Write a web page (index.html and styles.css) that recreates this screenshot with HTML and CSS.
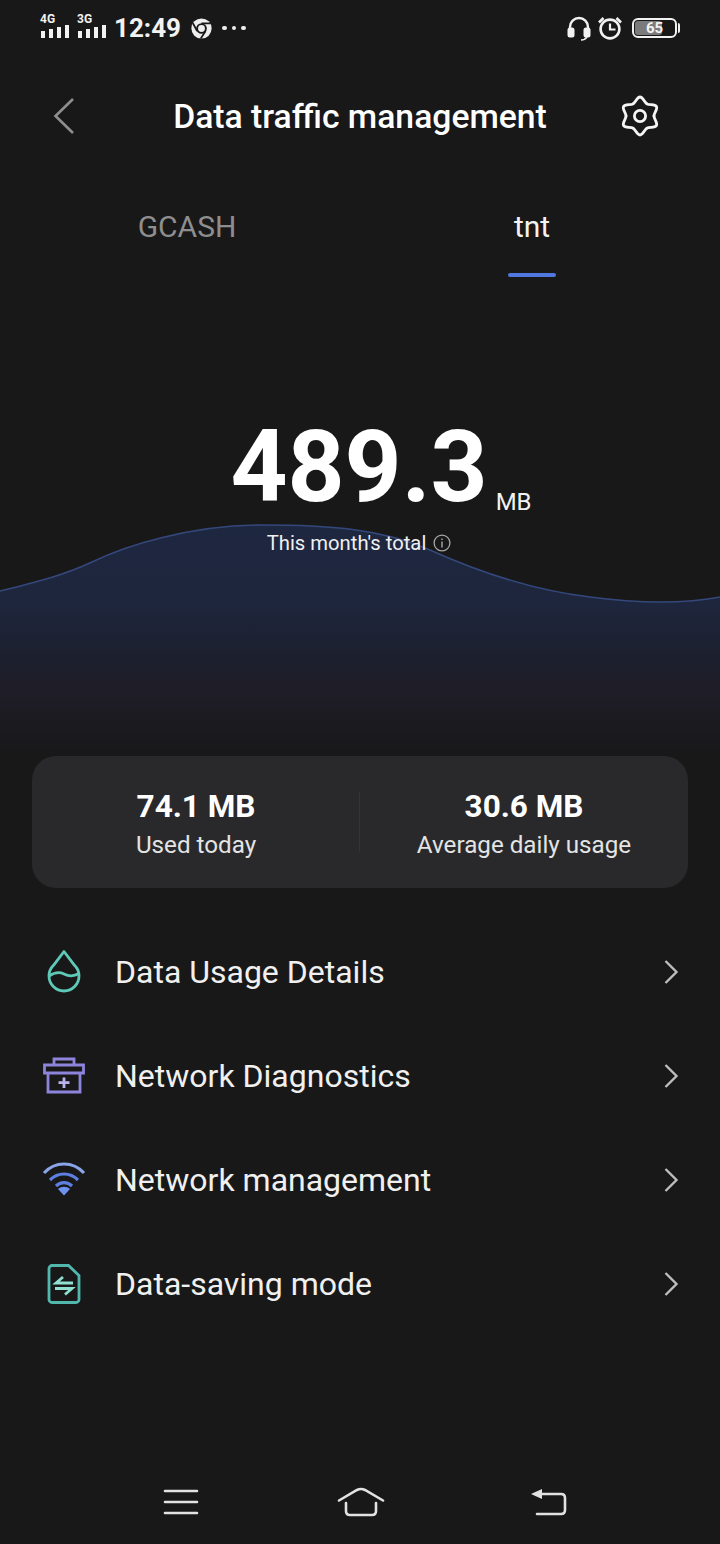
FILE: index.html
```html
<!DOCTYPE html>
<html lang="en">
<head>
    <meta charset="UTF-8">
    <meta name="viewport" content="width=device-width, initial-scale=1.0">
    <title>Data traffic management</title>
    <link rel="stylesheet" href="styles.css">
</head>
<body>
    <div class="screen">
        <div class="status">
            <div class="status-left">
                <div class="sim">
                    <span class="sim-label">4G</span>
                    <div class="bars"><i class="b1"></i><i class="b2"></i><i class="b3"></i><i class="b4"></i></div>
                </div>
                <div class="sim">
                    <span class="sim-label">3G</span>
                    <div class="bars"><i class="b1"></i><i class="b2"></i><i class="b3"></i><i class="b4"></i></div>
                </div>
                <span class="clock">12:49</span>
                <svg class="chrome" width="21" height="21" viewBox="0 0 22 22">
                    <circle cx="11" cy="11" r="10.6" fill="#eee"/>
                    <circle cx="11" cy="11" r="4.6" fill="#eee" stroke="#181819" stroke-width="2"/>
                    <path d="M11 5.6H20.5M6.4 13.6L2 5.5M15.2 13.8L10.2 21.4" stroke="#181819" stroke-width="1.8" fill="none"/>
                </svg>
                <div class="dots"><i></i><i></i><i></i></div>
            </div>
            <div class="status-right">
                <svg class="headset" width="26" height="26" viewBox="0 0 26 26" fill="none">
                    <path d="M4 15V12a9 9 0 0 1 18 0v3" stroke="#f2f2f2" stroke-width="2.4"/>
                    <rect x="1.5" y="12.5" width="7" height="10" rx="2.5" fill="#f2f2f2"/>
                    <rect x="17.5" y="12.5" width="7" height="10" rx="2.5" fill="#f2f2f2"/>
                    <path d="M21 22q-2 3-6 3" stroke="#f2f2f2" stroke-width="1.4"/>
                </svg>
                <svg width="26" height="26" viewBox="0 0 26 26" fill="none">
                    <circle cx="13" cy="14" r="9.4" stroke="#f2f2f2" stroke-width="2.6"/>
                    <path d="M13 8.5V14.5H18.5" stroke="#f2f2f2" stroke-width="2.2"/>
                    <path d="M2 7.5L6.5 3M24 7.5L19.5 3" stroke="#f2f2f2" stroke-width="2.6"/>
                </svg>
                <div class="battery">
                    <div class="battery-level"></div>
                    <span class="battery-text">65</span>
                </div>
            </div>
        </div>

        <div class="header">
            <svg class="back" width="24" height="38" viewBox="0 0 24 38" fill="none">
                <path d="M21 2L3.5 19L21 36" stroke="#8f8f8f" stroke-width="2.6"/>
            </svg>
            <h1>Data traffic management</h1>
            <svg class="gear" width="42" height="42" viewBox="0 0 42 42" fill="none" stroke="#f5f5f5" stroke-width="2.8" stroke-linecap="round">
                <path d="M14 8.9C16.5 7.5 18 2 21 2S25.5 7.5 28 8.9"/>
                <path transform="rotate(60 21 21)" d="M14 8.9C16.5 7.5 18 2 21 2S25.5 7.5 28 8.9"/>
                <path transform="rotate(120 21 21)" d="M14 8.9C16.5 7.5 18 2 21 2S25.5 7.5 28 8.9"/>
                <path transform="rotate(180 21 21)" d="M14 8.9C16.5 7.5 18 2 21 2S25.5 7.5 28 8.9"/>
                <path transform="rotate(240 21 21)" d="M14 8.9C16.5 7.5 18 2 21 2S25.5 7.5 28 8.9"/>
                <path transform="rotate(300 21 21)" d="M14 8.9C16.5 7.5 18 2 21 2S25.5 7.5 28 8.9"/>
                <circle cx="21" cy="21" r="5.6"/>
            </svg>
        </div>

        <div class="tabs">
            <div class="tab">GCASH</div>
            <div class="tab active">tnt</div>
        </div>

        <div class="hero">
            <svg class="wave" width="720" height="242" viewBox="0 0 720 242">
                <defs>
                    <linearGradient id="waveFill" x1="0" y1="0" x2="0" y2="1">
                        <stop offset="0" stop-color="#1e2740"/>
                        <stop offset="0.35" stop-color="#1e263d"/>
                        <stop offset="0.55" stop-color="#1c202f"/>
                        <stop offset="0.72" stop-color="#1f1d27"/>
                        <stop offset="1" stop-color="#181819"/>
                    </linearGradient>
                </defs>
                <path d="M0 77C36 68 62 62 92 48C125 32 190 11 262 11C325 11 380 14 430 36C470 54 530 76 590 83C620 87 645 88 660 88C685 88 705 86 720 83V242H0Z" fill="url(#waveFill)"/>
                <path d="M0 77C36 68 62 62 92 48C125 32 190 11 262 11C325 11 380 14 430 36C470 54 530 76 590 83C620 87 645 88 660 88C685 88 705 86 720 83" fill="none" stroke="#34487c" stroke-width="1.6"/>
            </svg>
            <div class="total">
                <span class="total-num">489.3</span>
                <span class="total-unit">MB</span>
            </div>
            <div class="total-label">
                This month's total
                <svg width="18" height="18" viewBox="0 0 18 18" fill="none">
                    <circle cx="9" cy="9" r="7.9" stroke="#a8a8a8" stroke-width="1.3"/>
                    <path d="M9 7.6V13.4M9 4.6V6" stroke="#a8a8a8" stroke-width="1.4"/>
                </svg>
            </div>
        </div>

        <div class="stats">
            <div class="stat">
                <div class="stat-value">74.1 MB</div>
                <div class="stat-label">Used today</div>
            </div>
            <div class="stat-line"></div>
            <div class="stat">
                <div class="stat-value">30.6 MB</div>
                <div class="stat-label">Average daily usage</div>
            </div>
        </div>

        <div class="menu">
            <div class="row">
                <svg class="row-icon" width="44" height="44" viewBox="0 0 44 44" fill="none" stroke="#5fc9b8" stroke-width="2.8">
                    <path d="M22 1.5L32.5 15.3A15 15 0 1 1 11.5 15.3Z" stroke-linejoin="round"/>
                    <path d="M7 26C13 22 18 22 22 24S31 27 37 23.5"/>
                </svg>
                <span class="row-text">Data Usage Details</span>
                <svg class="chev" width="16" height="26" viewBox="0 0 16 26" fill="none"><path d="M2.5 2L13.5 13L2.5 24" stroke="#bdbdbd" stroke-width="2.4"/></svg>
            </div>
            <div class="row">
                <svg class="row-icon" width="44" height="44" viewBox="0 0 44 44" fill="none" stroke="#8d84dc" stroke-width="2.8">
                    <path d="M12 11V5H32V11"/>
                    <path d="M2.5 11H41.5V19H2.5Z"/>
                    <path d="M6 19V38H38V19"/>
                    <path d="M22 23.5V34M16.5 28.7H27.5" stroke="#b9b3ee"/>
                </svg>
                <span class="row-text">Network Diagnostics</span>
                <svg class="chev" width="16" height="26" viewBox="0 0 16 26" fill="none"><path d="M2.5 2L13.5 13L2.5 24" stroke="#bdbdbd" stroke-width="2.4"/></svg>
            </div>
            <div class="row">
                <svg class="row-icon" width="44" height="44" viewBox="0 0 44 44" fill="none" stroke-width="3.2">
                    <path d="M2 15C13 3 31 3 42 15" stroke="#8aa4e8"/>
                    <path d="M8 22C16 14 28 14 36 22" stroke="#5c7fe0"/>
                    <path d="M14 28C18.5 23.5 25.5 23.5 30 28" stroke="#5c7fe0"/>
                    <path d="M16 31C19.5 28 24.5 28 28 31L22 37.5Z" fill="#6e92f0"/>
                </svg>
                <span class="row-text">Network management</span>
                <svg class="chev" width="16" height="26" viewBox="0 0 16 26" fill="none"><path d="M2.5 2L13.5 13L2.5 24" stroke="#bdbdbd" stroke-width="2.4"/></svg>
            </div>
            <div class="row">
                <svg class="row-icon" width="44" height="44" viewBox="0 0 44 44" fill="none" stroke-width="2.8">
                    <path d="M10 3.5H26.5L37 13.5V37.5A3 3 0 0 1 34 40.5H10A3 3 0 0 1 7 37.5V6.5A3 3 0 0 1 10 3.5Z" stroke="#52b8ae"/>
                    <path d="M31 21H14L21 15M13 26.5H30L23 32.5" stroke="#8fe0d0"/>
                </svg>
                <span class="row-text">Data-saving mode</span>
                <svg class="chev" width="16" height="26" viewBox="0 0 16 26" fill="none"><path d="M2.5 2L13.5 13L2.5 24" stroke="#bdbdbd" stroke-width="2.4"/></svg>
            </div>
        </div>

        <div class="navbar">
            <svg width="36" height="26" viewBox="0 0 36 26" fill="none">
                <path d="M2 2H34M2 13H34M2 24H34" stroke="#e2e2e2" stroke-width="2.6" stroke-linecap="round"/>
            </svg>
            <svg width="50" height="30" viewBox="0 0 50 30" fill="none">
                <path d="M3 13.5L21 3Q25 1 29 3L47 13.5" stroke="#e2e2e2" stroke-width="2.6" stroke-linecap="round"/>
                <path d="M10 16V24Q10 28 14 28H36Q40 28 40 24V16" stroke="#e2e2e2" stroke-width="2.6" stroke-linecap="round"/>
            </svg>
            <svg class="nav-back" width="38" height="28" viewBox="0 0 38 28" fill="none">
                <path d="M6 6H31Q35 6 35 10V22Q35 26 31 26H7" stroke="#e2e2e2" stroke-width="2.6" stroke-linecap="round"/>
                <path d="M1 6L12 1V11Z" fill="#e2e2e2"/>
            </svg>
        </div>
    </div>
</body>
</html>
```

FILE: styles.css
```css
body {
    margin: 0;
    padding: 0;
    background: #181819;
    color: #fff;
    font-family: Roboto, "Liberation Sans", sans-serif;
}
.screen {
    width: 720px;
    height: 1544px;
    display: flex;
    flex-direction: column;
    overflow: hidden;
}

/* status bar */
.status {
    height: 56px;
    padding: 0 43px 0 40px;
    display: flex;
    justify-content: space-between;
    align-items: center;
}
.status-left {
    display: flex;
    align-items: center;
}
.status-right {
    display: flex;
    align-items: center;
    gap: 4px;
}
.headset {
    margin-right: 1px;
}
.sim {
    width: 30px;
    margin: 0 7px 4px 0;
    display: flex;
    flex-direction: column;
}
.sim-label {
    font-size: 12px;
    font-weight: 700;
    line-height: 11px;
    color: #f2f2f2;
}
.bars {
    display: flex;
    align-items: flex-end;
    gap: 4px;
    height: 13px;
    padding-left: 1px;
}
.bars i {
    width: 4px;
    background: #f2f2f2;
}
.b1 { height: 7px; }
.b2 { height: 9px; }
.b3 { height: 11px; }
.b4 { height: 13px; }
.clock {
    font-size: 26px;
    font-weight: 700;
    color: #f2f2f2;
    margin-right: 10px;
}
.dots {
    display: flex;
    gap: 5px;
    margin-left: 10px;
}
.dots i {
    width: 4.5px;
    height: 4.5px;
    border-radius: 50%;
    background: #eee;
}
.battery {
    position: relative;
    width: 41px;
    height: 16px;
    margin-left: 5px;
    border: 2px solid #f2f2f2;
    border-radius: 6px;
    display: flex;
}
.battery:after {
    content: "";
    position: absolute;
    right: -5px;
    top: 3px;
    width: 2px;
    height: 10px;
    background: #f2f2f2;
    border-radius: 0 2px 2px 0;
}
.battery-level {
    width: 65%;
    margin: 1px;
    background: #7b7b7b;
    border-radius: 3px;
}
.battery-text {
    position: absolute;
    left: 0;
    right: 0;
    top: -2px;
    text-align: center;
    font-size: 15px;
    line-height: 20px;
    font-weight: 700;
    color: #f2f2f2;
}

/* title */
.header {
    height: 120px;
    padding: 0 59px;
    display: grid;
    grid-template-columns: 1fr auto 1fr;
    align-items: center;
}
.header h1 {
    margin: 0;
    font-size: 33.7px;
    font-weight: 500;
    color: #fff;
}
.back {
    margin-left: -7px;
}
.gear {
    justify-self: end;
}

/* tabs */
.tabs {
    display: grid;
    grid-template-columns: 374px 316px;
    height: 104px;
}
.tab {
    position: relative;
    padding-top: 33px;
    text-align: center;
    font-size: 30px;
    line-height: 36px;
    color: #8e8e8e;
}
.tab.active {
    color: #f2f2f2;
}
.tab.active:after {
    content: "";
    position: absolute;
    left: 134px;
    top: 97px;
    width: 48px;
    height: 4px;
    border-radius: 2px;
    background: #4f79e0;
}

/* big number and wave */
.hero {
    position: relative;
    height: 476px;
    display: flex;
    flex-direction: column;
    align-items: center;
}
.wave {
    position: absolute;
    left: 0;
    top: 234px;
}
.total {
    position: relative;
    margin-top: 127px;
    margin-left: 42px;
    display: flex;
    align-items: flex-end;
    gap: 8px;
}
.total-num {
    font-size: 99.5px;
    line-height: 120px;
    font-weight: 700;
}
.total-unit {
    margin-bottom: 11px;
    font-size: 24px;
    line-height: 28px;
    color: #f2f2f2;
}
.total-label {
    position: relative;
    margin: 4px 2px 0 0;
    display: flex;
    align-items: center;
    gap: 7px;
    font-size: 20.25px;
    line-height: 24px;
    color: #f0f0f0;
}

/* today / average card */
.stats {
    margin: 0 32px;
    height: 132px;
    background: #29292b;
    border-radius: 24px;
    display: flex;
    align-items: center;
}
.stat {
    flex: 1;
    padding-top: 8px;
    text-align: center;
}
.stat-value {
    font-size: 31.5px;
    line-height: 38px;
    font-weight: 700;
}
.stat-label {
    font-size: 24.2px;
    line-height: 38px;
    color: #e4e4e4;
}
.stat-line {
    width: 1px;
    height: 60px;
    margin-left: -1px;
    background: #343436;
}

/* menu rows */
.menu {
    margin-top: 32px;
    flex: 1;
}
.row {
    height: 104px;
    padding: 0 41px 0 42px;
    display: flex;
    align-items: center;
}
.row-icon {
    flex: none;
}
.row-text {
    flex: 1;
    margin-left: 29px;
    font-size: 32px;
    color: #f0f0f0;
}

/* bottom nav */
.navbar {
    height: 84px;
    padding-left: 163px;
    display: flex;
    align-items: center;
    gap: 137px;
}
.nav-back {
    margin-left: 7px;
}
```
